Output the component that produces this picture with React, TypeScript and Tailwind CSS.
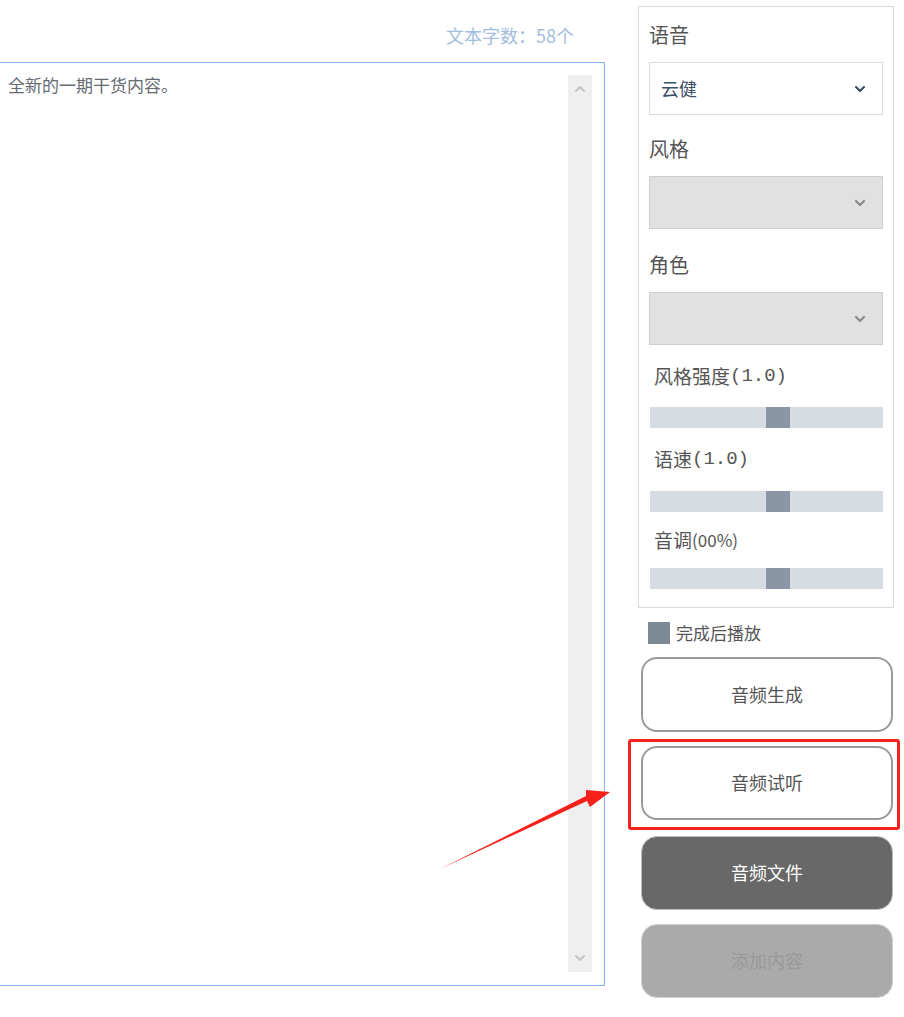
import { ChevronDown, ChevronUp } from 'lucide-react';

const font = { fontFamily: '"Noto Sans CJK SC", "Liberation Sans", sans-serif' };
const mono = { fontFamily: '"Liberation Mono", "Noto Sans CJK SC", monospace' };

const SelectBox = ({ value, disabled }: { value?: string; disabled?: boolean }) => (
  <div
    className={`h-[53px] w-[234px] flex items-center justify-between pl-[11px] pr-[14px] border ${
      disabled ? 'bg-[#e1e1e1] border-[#cfcfcf]' : 'bg-white border-[#dcdcdc]'
    }`}
  >
    <span className="text-[18px] text-[#3e5068]">{value}</span>
    <ChevronDown size={16} strokeWidth={3.2} className={disabled ? 'text-[#8a8a8a]' : 'text-[#3e5068]'} />
  </div>
);

const Slider = () => (
  <div className="relative ml-[1px] h-[21px] w-[233px] bg-[#d6dce1]">
    <div className="absolute left-[116px] top-0 h-[21px] w-[24px] bg-[#8a96a3]" />
  </div>
);

export default function App() {
  return (
    <div className="relative w-[904px] h-[1017px] bg-white overflow-hidden flex" style={font}>
      {/* left: text editor */}
      <div className="w-[605px] shrink-0 flex flex-col">
        <div className="h-[62px] flex items-center justify-end pr-[31px] pt-[8px]">
          <span className="text-[18px] text-[#a3bde0]">文本字数：58个</span>
        </div>
        <div className="-ml-[10px] h-[924px] border border-[#8ab4f8] flex">
          <div className="flex-1 pl-[17px] pt-[9px] text-[17px] text-[#666b73]">全新的一期干货内容。</div>
          <div className="w-[24px] mr-[12px] mt-[12px] mb-[13px] bg-[#efefef] flex flex-col items-center justify-between py-[6px]">
            <ChevronUp size={16} strokeWidth={3} className="text-[#c4c4c4]" />
            <ChevronDown size={16} strokeWidth={3} className="text-[#c4c4c4]" />
          </div>
        </div>
      </div>

      {/* right: settings */}
      <div className="ml-[33px] w-[256px] shrink-0 pt-[6px] flex flex-col">
        <div className="border border-[#dadada] pl-[10px] pb-[18px]">
          <div className="h-[55px] flex items-center text-[20px] text-[#555]">语音</div>
          <SelectBox value="云健" />
          <div className="h-[61px] flex items-center pt-[7px] text-[20px] text-[#555]">风格</div>
          <SelectBox disabled />
          <div className="h-[63px] flex items-center pt-[8px] text-[20px] text-[#555]">角色</div>
          <SelectBox disabled />
          <div className="h-[62px] flex items-center pl-[5px] text-[19px] text-[#555]">
            风格强度<span style={mono}>(1.0)</span>
          </div>
          <Slider />
          <div className="h-[63px] flex items-center pl-[5px] text-[19px] text-[#555]">
            语速<span style={mono}>(1.0)</span>
          </div>
          <Slider />
          <div className="h-[56px] flex items-center pl-[5px] text-[19px] text-[#555]">
            音调<span className="text-[17px]">(00%)</span>
          </div>
          <Slider />
        </div>

        <div className="mt-[12px] ml-[10px] flex items-center gap-[6px]">
          <div className="w-[22px] h-[22px] bg-[#7d8995]" />
          <span className="text-[17px] text-[#555]">完成后播放</span>
        </div>

        <div className="ml-[3px] w-[252px] flex flex-col mt-[11px]">
          <button className="h-[75px] rounded-[16px] border-2 border-[#9a9a9a] bg-white text-[18px] text-[#555]">
            音频生成
          </button>
          <div className="relative mt-[14px]">
            <div className="absolute -left-[13px] -top-[7px] -right-[7px] -bottom-[10px] border-[3px] border-[#f5211a] rounded-[3px]" />
            <button className="relative w-full h-[74px] rounded-[16px] border-2 border-[#9a9a9a] bg-white text-[18px] text-[#555]">
              音频试听
            </button>
          </div>
          <button className="mt-[16px] h-[74px] rounded-[16px] border border-[#bdbdbd] bg-[#686868] text-[18px] text-white">
            音频文件
          </button>
          <button className="mt-[14px] h-[74px] rounded-[16px] border border-[#d0d0d0] bg-[#aaaaaa] text-[18px] text-[#999]">
            添加内容
          </button>
        </div>
      </div>

      {/* annotation arrow */}
      <svg className="absolute left-0 top-0 pointer-events-none" width="904" height="1017">
        <polygon points="440,869 587,801 590,807 610,792 586,790 586,796" fill="#f5211a" />
      </svg>
    </div>
  );
}
